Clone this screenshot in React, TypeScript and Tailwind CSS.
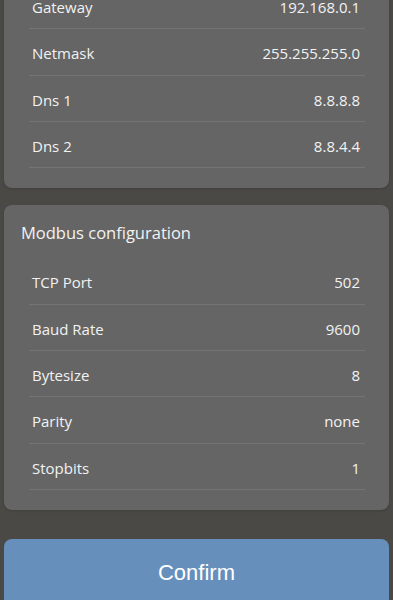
const networkRows = [
  { label: 'Gateway', value: '192.168.0.1' },
  { label: 'Netmask', value: '255.255.255.0' },
  { label: 'Dns 1', value: '8.8.8.8' },
  { label: 'Dns 2', value: '8.8.4.4' },
];

const modbusRows = [
  { label: 'TCP Port', value: '502' },
  { label: 'Baud Rate', value: '9600' },
  { label: 'Bytesize', value: '8' },
  { label: 'Parity', value: 'none' },
  { label: 'Stopbits', value: '1' },
];

function Row({ label, value }: { label: string; value: string }) {
  return (
    <div className="flex h-[46.33px] items-start justify-between border-b border-[#747474] pl-[3px] pr-[5px] pt-[13px]">
      <span className="text-[15px] leading-[22px]">{label}</span>
      <span className="text-[15px] leading-[22px]">{value}</span>
    </div>
  );
}

export default function App() {
  return (
    <div
      className="min-h-[600px] overflow-hidden bg-[#4b4946] px-[4px] text-[#f2f2f2]"
      style={{ fontFamily: '"Open Sans", "Noto Sans", sans-serif' }}
    >
      <div className="-mt-[17px] rounded-b-lg bg-[#656565] pb-[20px] pl-[25px] pr-[24px] shadow-sm">
        {networkRows.map((r) => (
          <Row key={r.label} label={r.label} value={r.value} />
        ))}
      </div>

      <div className="mt-[17px] rounded-lg bg-[#656565] pt-[16px] pb-[20px] shadow-sm">
        <h2 className="mb-[13px] px-[17px] text-[16.5px] leading-[24px] font-normal">
          Modbus configuration
        </h2>
        <div className="pl-[25px] pr-[24px]">
          {modbusRows.map((r) => (
            <Row key={r.label} label={r.label} value={r.value} />
          ))}
        </div>
      </div>

      <button
        type="button"
        className="mt-[29px] flex h-[68px] w-full items-center justify-center rounded-lg bg-[#6690bb] text-[22px] text-white"
        style={{ fontFamily: '"Liberation Sans", Arial, sans-serif' }}
      >
        Confirm
      </button>
    </div>
  );
}
